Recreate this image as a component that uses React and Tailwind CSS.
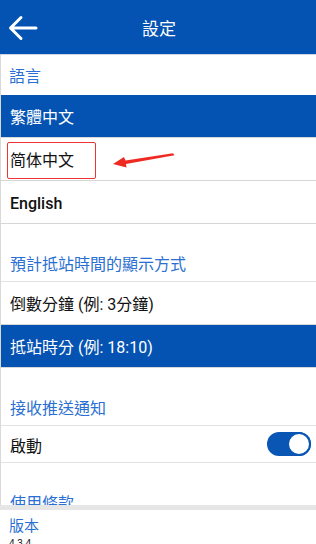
import React from 'react';

const font = { fontFamily: "Roboto, 'Noto Sans CJK TC', sans-serif" };

function Label({ children }) {
  return (
    <div className="h-[58px] flex items-end px-[9px] pb-[6px] border-b border-[#e2e2e2]">
      <span className="text-[16px] leading-[20px] text-[#2a70d2]">{children}</span>
    </div>
  );
}

function Row({ children, active, bold }) {
  return (
    <div
      className={`h-[43px] flex items-center px-[9px] pt-[4px] border-b ${
        active ? 'bg-[#0453b2] text-white border-[#d8d8d8]' : 'bg-white text-[#111] border-[#d6d6d6]'
      }`}
    >
      <span className={`text-[16px] leading-[20px] ${bold ? 'font-medium' : ''}`}>{children}</span>
    </div>
  );
}

export default function App() {
  return (
    <div className="w-[316px] h-[544px] flex flex-col bg-white overflow-hidden relative" style={font}>
      {/* Header */}
      <div className="h-[55px] shrink-0 bg-[#0453b2] border-b border-[#c9d6e6] flex items-center relative">
        <svg className="absolute left-[8px] top-[15px]" width="30" height="26" viewBox="0 0 30 26" fill="none">
          <path d="M28 13H3M13 2.5L2.5 13L13 23.5" stroke="white" strokeWidth="3" strokeLinecap="round" strokeLinejoin="round" />
        </svg>
        <div className="flex-1 text-center text-white text-[17px] leading-[20px] pl-[2px] pt-[3px]">設定</div>
      </div>

      {/* Content */}
      <div className="flex-1 overflow-hidden border-l border-[#d9d9d9]">
        <div className="h-[40px] flex items-center px-[8px] pt-[4px]">
          <span className="text-[16px] leading-[20px] text-[#2a70d2]">語言</span>
        </div>
        <Row active>繁體中文</Row>
        <Row>简体中文</Row>
        <Row bold>English</Row>
        <Label>預計抵站時間的顯示方式</Label>
        <Row>倒數分鐘 (例: 3分鐘)</Row>
        <Row active>抵站時分 (例: 18:10)</Row>
        <Label>接收推送通知</Label>
        <div className="h-[37px] flex items-center justify-between pl-[9px] pr-[5px] border-b border-[#e2e2e2]">
          <span className="text-[16px] leading-[20px] text-[#111] pt-[6px]">啟動</span>
          <div className="w-[44px] h-[24px] rounded-full bg-[#0a56b4] flex items-center justify-end">
            <div className="w-[24px] h-[24px] rounded-full bg-white border-2 border-[#0a56b4]" />
          </div>
        </div>
        <Label>使用條款</Label>
      </div>

      {/* Footer */}
      <div className="h-[39px] shrink-0 border-t-[5px] border-[#e6e6e6] bg-white px-[9px] pt-[7px]">
        <div className="text-[15px] leading-[18px] text-[#2a70d2]">版本</div>
        <div className="text-[10px] leading-[12px] text-[#222] pt-[3px]">4.3.4</div>
      </div>

      {/* Annotation */}
      <div className="absolute left-[7px] top-[142px] w-[89px] h-[37px] border-[1.5px] border-[#e33] rounded-[2px]" />
      <svg className="absolute left-[110px] top-[150px]" width="70" height="22" viewBox="0 0 70 22">
        <path d="M63 3.2L64.5 5.2L16 14L16.5 17.5L3 14L14 7L15.5 10.5Z" fill="#ee2a22" />
      </svg>
    </div>
  );
}
